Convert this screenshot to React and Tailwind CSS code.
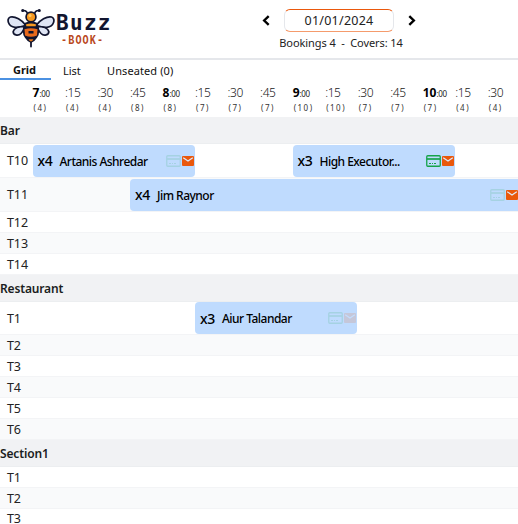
const slots = [
  ["7", ":00", "4"], ["", ":15", "4"], ["", ":30", "4"], ["", ":45", "8"],
  ["8", ":00", "8"], ["", ":15", "7"], ["", ":30", "7"], ["", ":45", "7"],
  ["9", ":00", "10"], ["", ":15", "10"], ["", ":30", "7"], ["", ":45", "7"],
  ["10", ":00", "7"], ["", ":15", "4"], ["", ":30", "4"],
];

function Bee() {
  return (
    <svg className="h-[41px] w-[48px] shrink-0" viewBox="0 0 48 41" fill="none" stroke="#11152f" strokeWidth="1.7" strokeLinecap="round" strokeLinejoin="round">
      <path d="M20.500 6C20 3.500 18.500 2.300 16 2.500M27.500 6C28 3.500 29.500 2.300 32 2.500" />
      <circle cx="15.700" cy="2.500" r=".7" fill="#11152f" />
      <circle cx="32.300" cy="2.500" r=".7" fill="#11152f" />
      <path d="M19 17.500C15 12 8 8 3.500 9C-1 10.500 1 18.500 8 19.300C12 19.500 16 18.500 19 17.500Z" fill="#dfe5f4" />
      <path d="M29 17.500C33 12 40 8 44.500 9C49 10.500 47 18.500 40 19.300C36 19.500 32 18.500 29 17.500Z" fill="#dfe5f4" />
      <path d="M18.500 18.500C13 18.500 7 20 6.200 23.500C6 27 11 28.500 14 25.500C16 23.500 17 21 18.500 18.500Z" fill="#dfe5f4" />
      <path d="M29.500 18.500C35 18.500 41 20 41.800 23.500C42 27 37 28.500 34 25.500C32 23.500 31 21 29.500 18.500Z" fill="#dfe5f4" />
      <path d="M18.500 15.500Q24 12.500 29.500 15.500C32 20 32 26 29.500 29C28 31.500 26 33 24 34C22 33 20 31.500 18.500 29C16 26 16 20 18.500 15.500Z" fill="#11152f" />
      <path d="M24 33V38.500" strokeWidth="1.800" />
      <circle cx="24" cy="9" r="4.900" fill="#f79a22" />
      <circle cx="23" cy="7.500" r="1.500" fill="#ffcc68" stroke="none" />
      <path d="M18.800 16.500Q24 14.500 29.200 16.500L28.500 18.300H19.500Z" fill="#f79a22" stroke="none" />
      <path d="M17.500 21.300Q24 19.300 30.500 21.300L30 27.500Q24 30 18 27.500Z" fill="#e96a1c" stroke="none" />
      <path d="M21.500 23H26.500V25.500H21.500Z" fill="#11152f" stroke="none" />
      <path d="M21.500 31.300H26.500L25 33.300H23Z" fill="#e87719" stroke="none" />
    </svg>
  );
}

function Chevron({ flip }) {
  return (
    <svg className="h-[11px] w-[8px]" viewBox="0 0 8 11" fill="none" stroke="#000" strokeWidth="2.400">
      <path d={flip ? "M1.300 1.200L5.800 5.500L1.300 9.800" : "M6.700 1.200L2.200 5.500L6.700 9.800"} />
    </svg>
  );
}

const cardTone = {
  on: "text-[#16a34a]",
  off: "text-[#16a34a] opacity-15",
};

function Booking({ covers, name, card, mailOff, className }) {
  return (
    <div className={"flex h-[32px] shrink-0 items-center rounded-[4px] bg-[#bfdbfe] pl-[5px] font-['Noto_Sans',sans-serif] font-medium text-black " + className}>
      <span className="w-[22px] shrink-0 pt-px text-[14px] tracking-[-0.3px]">{covers}</span>
      <span className="grow whitespace-nowrap pt-[2px] text-[12px] tracking-[-0.520px]">{name}</span>
      <svg className={"h-[12px] w-[15px] shrink-0 " + cardTone[card]} viewBox="0 0 15 12" fill="none" stroke="currentColor">
        <rect x=".75" y=".75" width="13.500" height="10.500" rx="1" strokeWidth="1.300" />
        <path d="M1 4H14" strokeWidth="1.700" />
        <path d="M3 8.500H5M6 8.500H7M8 8.500H10" strokeWidth="1" />
      </svg>
      <svg className={"ml-px mr-px h-[10px] w-[12px] shrink-0 " + (mailOff ? "opacity-15" : "")} viewBox="0 0 12 10">
        <rect width="12" height="10" rx="1" fill="#ea580c" />
        <path d="M1.200 1.700L6 5L10.800 1.700" fill="none" stroke="#dbeafe" strokeWidth="1.200" />
      </svg>
    </div>
  );
}

function Section({ title }) {
  return (
    <div className="flex h-[27px] items-center border-b border-[#eceef0] bg-[#f1f2f4] pt-[2px] text-[12px] font-semibold tracking-[-.150px] text-[#1b1d21]">
      {title}
    </div>
  );
}

function Row({ label, odd, className = "h-[21px]", children }) {
  return (
    <div className={"flex items-center overflow-hidden border-b border-[#f3f4f6] " + (odd ? "bg-[#f9fafb] " : "bg-white ") + className}>
      <span className="w-[32.500px] shrink-0 pl-[7px] pt-[2px] text-[12.500px] tracking-[-.1px] text-[#222]">{label}</span>
      {children}
    </div>
  );
}

export default function App() {
  return (
    <div className="flex h-[524px] w-[518px] flex-col overflow-hidden bg-white font-['Noto_Sans','Open_Sans',sans-serif] leading-none text-black *:shrink-0">
      <header className="flex h-[60px] border-b-2 border-[#e5e7eb]">
        <div className="flex w-[259px] pl-[7px] pt-[8px]">
          <Bee />
          <div className="ml-[1px] flex flex-col pt-[4px] font-['DejaVu_Sans_Mono',monospace] font-bold">
            <span className="text-[21px] leading-[22px] tracking-[1.300px] text-[#11152f]">Buzz</span>
            <span className="ml-[5px] origin-left scale-x-75 font-['Liberation_Mono',monospace] text-[13.500px] leading-[14px] tracking-[1.500px] text-[#b94720]">-BOOK-</span>
          </div>
        </div>
        <div className="flex w-[160px] flex-col items-center pt-[9px]">
          <div className="flex items-center gap-[14px]">
            <Chevron />
            <div className="flex h-[23px] w-[110px] items-center justify-center rounded-[6px] border border-x-[#e5e7eb] border-b-[#f59b6c] border-t-[#ea580c] pt-px text-[12.500px] tracking-[.25px] text-[#222]">01/01/2024</div>
            <Chevron flip />
          </div>
          <div className="ml-[4px] mt-[5px] whitespace-pre text-[11px] tracking-[-.080px] text-[#222]">Bookings 4  -  Covers: 14</div>
        </div>
      </header>
      <nav className="flex h-[20px] text-[11px] text-[#111]">
        <div className="flex w-[51px] items-center justify-center border-b-2 border-[#4b91e2] pr-[2px] font-bold">Grid</div>
        <div className="ml-[12px] flex w-[44px] items-center">List</div>
        <div className="flex items-center tracking-[.1px]">Unseated (0)</div>
      </nav>
      <div className="flex h-[37px] pl-[32.500px] pt-[6px]">
        {slots.map(([hour, minute, covers], i) => (
          <div key={i} className="flex w-[32.530px] shrink-0 flex-col whitespace-nowrap">
            <div className="flex h-[17px] items-baseline">
              {hour && <b className="text-[12px] leading-[14px]">{hour}</b>}
              <span className={hour ? "text-[8px] tracking-[-.35px] text-[#222]" : "text-[12px] font-light leading-[14px] tracking-[-.4px] text-[#222]"}>{minute}</span>
            </div>
            <span className="pl-px text-[8px] leading-[10px] tracking-[1.500px] text-[#333]">({covers})</span>
          </div>
        ))}
      </div>
      <Section title="Bar" />
      <Row label="T10" className="h-[34px]">
        <Booking covers="x4" name="Artanis Ashredar" card="off" className="w-[162px]" />
        <Booking covers="x3" name="High Executor..." card="on" className="ml-[98px] w-[162px]" />
      </Row>
      <Row label="T11" odd className="h-[34px]">
        <Booking covers="x4" name="Jim Raynor" card="off" className="ml-[97.500px] w-[389px] rounded-r-none" />
      </Row>
      <Row label="T12" />
      <Row label="T13" odd />
      <Row label="T14" />
      <Section title="Restaurant" />
      <Row label="T1" className="h-[33px]">
        <Booking covers="x3" name="Aiur Talandar" card="off" mailOff className="ml-[162.500px] w-[162px]" />
      </Row>
      <Row label="T2" odd />
      <Row label="T3" />
      <Row label="T4" odd />
      <Row label="T5" />
      <Row label="T6" odd />
      <Section title="Section1" />
      <Row label="T1" />
      <Row label="T2" odd />
      <Row label="T3" className="h-[20px]" />
    </div>
  );
}
